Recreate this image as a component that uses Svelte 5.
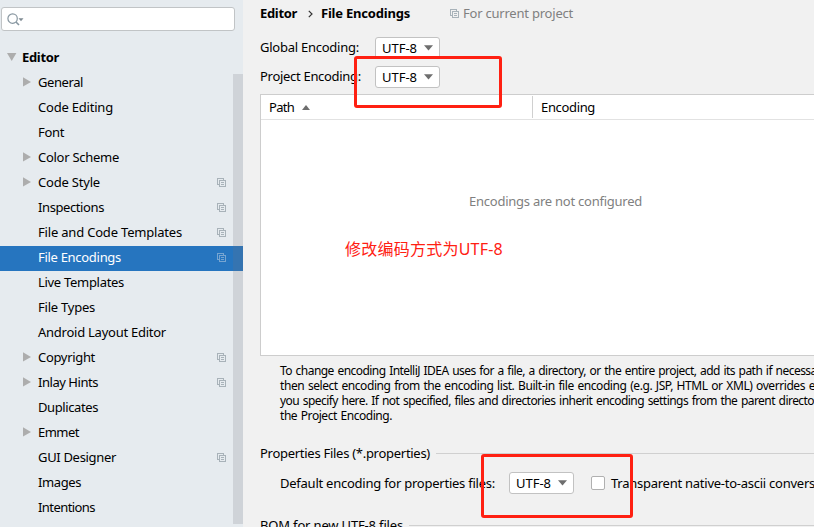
<script>
  const tree = [
    { label: 'General', w: 45, arrow: true },
    { label: 'Code Editing', w: 75 },
    { label: 'Font', w: 26 },
    { label: 'Color Scheme', w: 81, arrow: true },
    { label: 'Code Style', w: 62, arrow: true, project: true },
    { label: 'Inspections', w: 66, project: true },
    { label: 'File and Code Templates', w: 144, project: true },
    { label: 'File Encodings', w: 83, project: true, selected: true },
    { label: 'Live Templates', w: 86 },
    { label: 'File Types', w: 57 },
    { label: 'Android Layout Editor', w: 128 },
    { label: 'Copyright', w: 57, arrow: true, project: true },
    { label: 'Inlay Hints', w: 60, arrow: true, project: true },
    { label: 'Duplicates', w: 60 },
    { label: 'Emmet', w: 41, arrow: true },
    { label: 'GUI Designer', w: 78, project: true },
    { label: 'Images', w: 43 },
    { label: 'Intentions', w: 57 },
  ];

  const hint = [
    { text: 'To change encoding IntelliJ IDEA uses for a file, a directory, or the entire project, add its path if necessary and', upto: 'To change encoding IntelliJ IDEA uses for a file, a directory, or the entire project, add its path if', at: 492 },
    { text: 'then select encoding from the encoding list. Built-in file encoding (e.g. JSP, HTML or XML) overrides encoding', upto: 'then select encoding from the encoding list. Built-in file encoding (e.g. JSP, HTML or XML) overrides', at: 525 },
    { text: 'you specify here. If not specified, files and directories inherit encoding settings from the parent directory or from', upto: 'you specify here. If not specified, files and directories inherit encoding settings from the parent', at: 495 },
    { text: 'the Project Encoding.', upto: 'the Project Encoding.', at: 112 },
  ];

  // Tracks the letters so that the leading part of a label takes up a given width.
  function fit(node, { w, upto }) {
    const range = document.createRange();
    const count = upto ? upto.length : node.textContent.length;
    range.setStart(node.firstChild, 0);
    range.setEnd(node.firstChild, count);
    const natural = range.getBoundingClientRect().width;
    node.style.letterSpacing = `${(w - natural) / count}px`;
  }
</script>

{#snippet t(text, w, upto)}<span class="t" use:fit={{ w, upto }}>{text}</span>{/snippet}

{#snippet copyIcon()}
  <svg class="copy" width="9" height="9" viewBox="0 0 9 9" fill="none" stroke="currentColor" shape-rendering="crispEdges">
    <path d="M2.5 6.5H.5V.5H6.5V2.5M2.5 2.5H8.5V8.5H2.5ZM4 4.5H7M4 6.5H7" />
  </svg>
{/snippet}

{#snippet combo()}
  <div class="combo">
    {@render t('UTF-8', 35)}
    <svg width="9" height="6" viewBox="0 0 9 6"><path d="M0 .3H9L4.5 5.5Z" fill="#6e6e6e" /></svg>
  </div>
{/snippet}

<div class="window">
  <aside>
    <div class="search">
      <svg width="18" height="14" viewBox="0 0 18 14" fill="none">
        <circle cx="5.6" cy="5.6" r="4.7" stroke="#8796a0" stroke-width="1.2" />
        <path d="M9 9L12 12" stroke="#8796a0" stroke-width="1.6" />
        <path d="M11.5 5.2H16.5L14 8.2Z" fill="#7f8b93" />
      </svg>
    </div>
    <div class="row root">
      <svg class="open" width="10" height="8" viewBox="0 0 10 8"><path d="M0 0H9.4L4.7 8Z" fill="#adadad" /></svg>
      {@render t('Editor', 37)}
    </div>
    {#each tree as item}
      <div class="row" class:selected={item.selected}>
        <span class="toggle">
          {#if item.arrow}
            <svg width="8" height="10" viewBox="0 0 8 10"><path d="M0 .3V9.5L8 4.9Z" fill="#adadad" /></svg>
          {/if}
        </span>
        {@render t(item.label, item.w)}
        {#if item.project}{@render copyIcon()}{/if}
      </div>
    {/each}
    <div class="scrollbar"></div>
  </aside>

  <main>
    <div class="crumbs">
      <b>{@render t('Editor', 37)}</b>
      <svg width="5" height="8" viewBox="0 0 5 8"><path d="M.8 .8L4 4L.8 7.2" fill="none" stroke="#333" stroke-width="1.2" /></svg>
      <b>{@render t('File Encodings', 89)}</b>
      <div class="scope">{@render copyIcon()}{@render t('For current project', 110)}</div>
    </div>

    <div class="field"><label>{@render t('Global Encoding:', 99)}</label>{@render combo()}</div>
    <div class="field"><label>{@render t('Project Encoding:', 101)}</label>{@render combo()}</div>

    <div class="table">
      <div class="thead">
        <div class="path">
          {@render t('Path', 25)}
          <svg width="8" height="5" viewBox="0 0 8 5"><path d="M0 5H8L4 0Z" fill="#6e6e6e" /></svg>
        </div>
        <div class="encoding">{@render t('Encoding', 54)}</div>
      </div>
      <div class="empty">{@render t('Encodings are not configured', 173)}</div>
      <div class="note">{@render t('修改编码方式为UTF-8', 158)}</div>
    </div>

    <div class="hint">
      {#each hint as line}
        <div>{@render t(line.text, line.at, line.upto)}</div>
      {/each}
    </div>

    <div class="section">{@render t('Properties Files (*.properties)', 170)}<hr /></div>
    <div class="props">
      <label>{@render t('Default encoding for properties files:', 215)}</label>
      {@render combo()}
      <span class="check"></span>
      {@render t('Transparent native-to-ascii conversion', 204, 'Transparent native-to-ascii convers')}
    </div>
    <div class="section bom">{@render t('BOM for new UTF-8 files', 143)}<hr /></div>
  </main>

  <div class="mark first"></div>
  <div class="mark second"></div>
</div>

<style>
  .window {
    position: relative;
    display: flex;
    width: 814px;
    height: 527px;
    overflow: hidden;
    background: #f1f1f1;
    color: #000;
    font: 13px/20px "Noto Sans", "Noto Sans CJK SC", sans-serif;
    white-space: nowrap;
  }
  .t { display: inline-block; white-space: pre; }
  svg { flex: none; display: block; }

  aside {
    position: relative;
    flex: none;
    box-sizing: border-box;
    width: 243px;
    padding-top: 7px;
    background: #e6ebef;
  }
  .search {
    box-sizing: border-box;
    width: 234px;
    height: 24px;
    margin: 0 0 15px 1px;
    padding: 5px 0 0 5px;
    border: 1px solid #c1c4c6;
    border-radius: 3px;
    background: #fff;
  }
  .row {
    display: flex;
    align-items: center;
    box-sizing: border-box;
    height: 25px;
    padding: 0 17px 4px 23px;
  }
  .root { padding-left: 7px; gap: 5px; font-weight: 700; }
  .toggle { width: 15px; }
  .toggle svg { margin-top: 1px; }
  .copy { color: #a8b2b9; }
  .row .copy { margin: 2px 0 0 auto; }
  .selected { background: #2675bf; color: #fff; }
  .selected .copy { color: #77a5d1; }
  .scrollbar {
    position: absolute;
    top: 74px;
    right: 0;
    width: 10px;
    height: 450px;
    background: rgba(115, 115, 125, 0.2);
  }

  main { flex: none; width: 620px; padding-left: 17px; }
  .crumbs { display: flex; align-items: center; height: 20px; padding-top: 3px; }
  .crumbs > svg { margin: 2px 8px 0 11px; }
  .scope { display: flex; align-items: center; gap: 4px; margin-left: 40px; color: #808080; }
  .field { display: flex; height: 22px; margin-top: 7px; }
  .crumbs + .field { margin-top: 14px; }
  .field label { width: 115px; }
  .combo {
    display: flex;
    align-items: center;
    justify-content: space-between;
    box-sizing: border-box;
    width: 65px;
    height: 22px;
    padding: 0 6px;
    border: 1px solid #c2c2c2;
    border-radius: 3px;
    background: #fff;
  }

  .table {
    box-sizing: border-box;
    height: 262px;
    margin-top: 6px;
    border: 1px solid #cdcdcd;
    background: #fff;
  }
  .thead { display: flex; align-items: center; height: 24px; border-bottom: 1px solid #e2e2e2; }
  .path {
    display: flex;
    align-items: center;
    gap: 8px;
    box-sizing: border-box;
    width: 272px;
    height: 22px;
    padding-left: 8px;
    border-right: 1px solid #d0d0d0;
  }
  .encoding { padding-left: 8px; }
  .empty { margin: 71px 0 0 208px; color: #808080; }
  .note { margin: 25px 0 0 84px; color: #ff2012; font-size: 16px; line-height: 26px; }

  .hint { margin: 7px 0 0 20px; font-size: 12px; line-height: 15px; word-spacing: 1px; }
  .section { display: flex; align-items: center; height: 20px; margin-top: 20px; }
  hr { flex: 1; margin: 0 0 0 6px; border: 0; border-top: 1px solid #d0d0d0; }
  .props { display: flex; align-items: center; height: 22px; margin: 9px 0 0 20px; }
  .props label { width: 229px; }
  .check {
    box-sizing: border-box;
    width: 14px;
    height: 14px;
    margin: 0 6px 0 17px;
    border: 1px solid #b0b0b0;
    border-radius: 2px;
    background: #fff;
  }
  .bom { margin-top: 21px; }

  .mark { position: absolute; box-sizing: border-box; border: 3px solid #ff2012; border-radius: 3px; }
  .first { left: 354px; top: 56px; width: 148px; height: 52px; }
  .second { left: 481px; top: 454px; width: 152px; height: 64px; }
</style>
